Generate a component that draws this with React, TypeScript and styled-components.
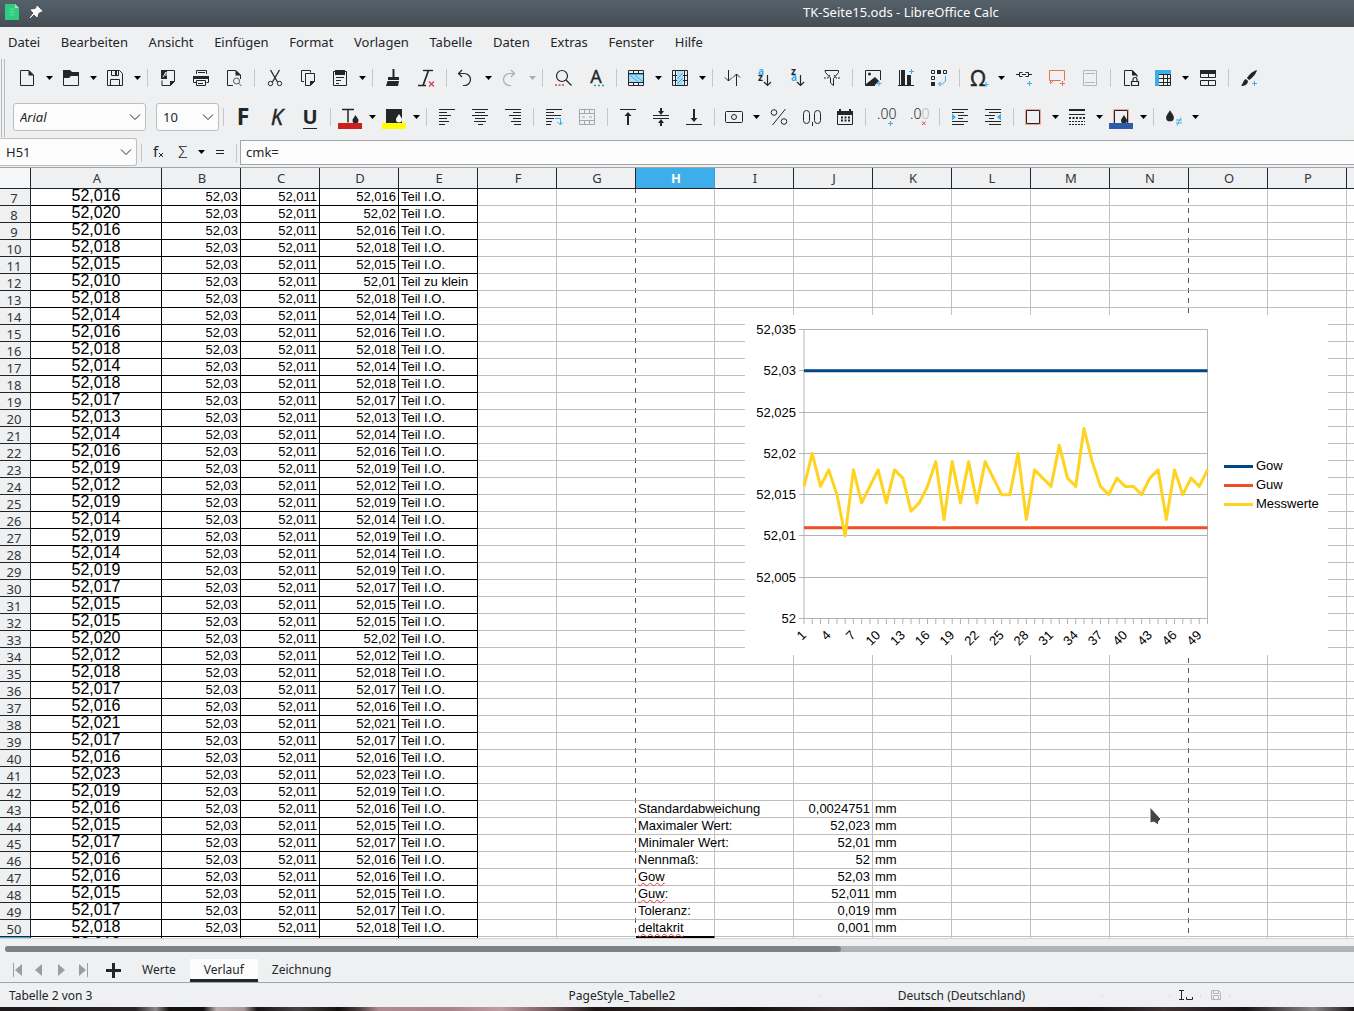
import React from "react";
import styled, { createGlobalStyle } from "styled-components";

const ui = `"Noto Sans", "Open Sans", sans-serif`;
const sheetFont = `"Liberation Sans", Arial, sans-serif`;
const ink = "#232629";
const blue = "#3daee9";
const red = "#da4453";
const orange = "#e8714f";
const face = "#eff0f1";

const Global = createGlobalStyle`
  *, *::before, *::after { box-sizing: border-box; }
  body { margin: 0; background: ${face}; font-family: ${ui}; font-size: 13px; color: ${ink}; overflow: hidden; }
  button, input, select { font: inherit; color: inherit; margin: 0; }
`;

/* ---------- window frame ---------- */

const Window = styled.div`
  display: flex;
  flex-direction: column;
  height: 100vh;
  background: ${face};
`;

const TitleBar = styled.header`
  display: flex;
  align-items: center;
  height: 27px;
  flex: none;
  padding: 0 15px 3px 4px;
  gap: 9px;
  color: #fcfcfc;
  background: linear-gradient(#566069, #454e55);
`;

const TitleSpace = styled.span<{ $grow: number }>`
  flex: ${(p) => p.$grow} 1 0;
`;

const Title = styled.h1`
  margin: 0;
  font-size: 13px;
  line-height: 18px;
  font-weight: 400;
  white-space: nowrap;
`;

const MenuBar = styled.nav`
  display: flex;
  align-items: center;
  justify-content: space-between;
  height: 32px;
  max-width: 711px;
  flex: none;
  padding: 0 8px 2px;
`;

const MenuItem = styled.button`
  border: 0;
  background: none;
  padding: 0;
  line-height: 20px;
`;

/* ---------- toolbars ---------- */

const ToolBar = styled.div`
  display: flex;
  align-items: flex-start;
  height: 39px;
  flex: none;
`;

const Grip = styled.span<{ $space: number }>`
  width: 4px;
  height: 39px;
  margin: 0 ${(p) => p.$space}px 0 1px;
  border: solid #b9bbbd;
  border-width: 0 1px;
`;

const ToolButton = styled.button<{ $menu?: boolean }>`
  display: flex;
  align-items: flex-start;
  width: 33px;
  height: 39px;
  flex: none;
  border: 0;
  background: none;
  padding: 7px 0 0 ${(p) => (p.$menu ? 4 : 5)}px;
  svg { overflow: visible; }
`;

const DropButton = styled.button`
  display: flex;
  align-items: flex-start;
  width: 11px;
  height: 39px;
  flex: none;
  border: 0;
  background: none;
  padding: 16px 0 0 2px;
`;

const Separator = styled.span<{ $top?: number }>`
  width: 1px;
  height: 18px;
  flex: none;
  margin: ${(p) => p.$top ?? 10}px 3px 0 4px;
  background: #c4c6c8;
`;

const ComboBox = styled.label<{ $w: number; $top: number; $right: number; $flush?: boolean }>`
  display: grid;
  align-items: center;
  width: ${(p) => p.$w}px;
  height: 28px;
  flex: none;
  margin: ${(p) => p.$top}px ${(p) => p.$right}px 0 0;
  background: #fcfcfc;
  border: 1px solid #bcbec0;
  border-left-width: ${(p) => (p.$flush ? 0 : 1)}px;
  border-radius: ${(p) => (p.$flush ? "0 3px 3px 0" : "3px")};
  > * { grid-area: 1 / 1; }
  svg { justify-self: end; margin-right: 4px; pointer-events: none; }
`;

const Combo = styled.select<{ $italic?: boolean }>`
  appearance: none;
  border: 0;
  background: none;
  width: 100%;
  height: 26px;
  padding: 0 18px 0 6px;
  font-style: ${(p) => (p.$italic ? "italic" : "normal")};
`;

const FormulaBar = styled.div`
  display: flex;
  align-items: flex-start;
  height: 31px;
  flex: none;
  border-bottom: 1px solid #a2a4a6;
`;

const FormulaButton = styled.button<{ $w: number }>`
  width: ${(p) => p.$w}px;
  height: 28px;
  flex: none;
  border: 0;
  background: none;
  padding: 2px 0 0;
  display: flex;
  justify-content: center;
  align-items: center;
  svg { overflow: visible; }
`;

const FormulaInput = styled.input`
  flex: 1;
  min-width: 0;
  height: 25px;
  margin-top: 3px;
  padding: 0 5px 2px;
  border: 1px solid #a2a4a6;
  border-right: 0;
  background: #fcfcfc;
`;

/* ---------- sheet ---------- */

const Viewport = styled.main`
  position: relative;
  flex: 1;
  min-height: 0;
  overflow: hidden;
  background: #fff;
  border-bottom: 1px solid #d3d5d7;
`;

const Sheet = styled.table`
  table-layout: fixed;
  width: 1426px;
  border-collapse: separate;
  border-spacing: 0;
  font-family: ${sheetFont};
  font-size: 13px;
  color: #000;
`;

const Col = styled.col<{ $w: number; $break?: boolean }>`
  width: ${(p) => p.$w}px;
  ${(p) =>
    p.$break &&
    `background: repeating-linear-gradient(#555 0 5px, transparent 5px 10px) right top / 1px 100% no-repeat;`}
`;

const ColHead = styled.th<{ $on?: boolean }>`
  height: 21px;
  padding: 0 0 0 2px;
  font: ${(p) => (p.$on ? 700 : 400)} 13px/20px ${ui};
  color: ${(p) => (p.$on ? "#fcfcfc" : "#31363b")};
  background: ${(p) => (p.$on ? blue : face)};
  border-right: 1px solid ${(p) => (p.$on ? "#3a9fd4" : ink)};
  border-bottom: 1px solid ${ink};
`;

const Corner = styled.td`
  padding: 0;
  background: #f5f7f9;
  border-right: 1px solid ${ink};
  border-bottom: 1px solid ${ink};
`;

const RowHead = styled.th<{ $on?: boolean }>`
  height: 17px;
  padding: 2px 2px 0 0;
  vertical-align: top;
  font: 400 13px/14px ${ui};
  color: #31363b;
  background: ${(p) => (p.$on ? blue : face)};
  border-right: 1px solid ${ink};
  border-bottom: 1px solid ${ink};
`;

type CellProps = { $boxed?: boolean; $align?: string; $big?: boolean; $break?: boolean; $cursor?: "above" | "on" };

const Cell = styled.td<CellProps>`
  height: 17px;
  padding: 0 2px;
  vertical-align: top;
  white-space: nowrap;
  text-align: ${(p) => p.$align ?? "left"};
  font-size: ${(p) => (p.$big ? 16 : 13)}px;
  line-height: ${(p) => (p.$big ? 14 : 16)}px;
  border-right: 1px solid ${(p) => (p.$break ? "transparent" : p.$boxed ? "#000" : "#c0c0c0")};
  border-bottom: 1px solid ${(p) => (p.$boxed || p.$cursor ? "#000" : "#c0c0c0")};
  ${(p) => p.$cursor === "on" && "border-top: 1px solid #000;"}
`;

const Misspelt = styled.span`
  text-decoration: underline wavy #e03c3c 1px;
  text-underline-offset: 1px;
  text-decoration-skip-ink: none;
`;

const ChartFrame = styled.figure`
  position: absolute;
  left: 745px;
  top: 147px;
  width: 583px;
  height: 340px;
  margin: 0;
  background: #fff;
  svg { display: block; }
`;

const Pointer = styled.svg`
  position: absolute;
  left: 1146px;
  top: 636px;
`;

/* ---------- lower bars ---------- */

const ScrollRow = styled.div`
  height: 20px;
  flex: none;
  padding: 7px 0 0 5px;
`;

const ScrollTrack = styled.div`
  height: 6px;
  border-radius: 3px 0 0 3px;
  background: #b1b3b4;
`;

const ScrollThumb = styled.div`
  width: 62%;
  height: 6px;
  border-radius: 3px;
  background: #7f8183;
`;

const TabRow = styled.div`
  display: flex;
  height: 23px;
  flex: none;
  padding-left: 5px;
`;

const NavButton = styled.button<{ $add?: boolean }>`
  width: ${(p) => (p.$add ? 35 : 22)}px;
  height: 23px;
  border: 0;
  background: none;
  padding: 0 0 ${(p) => (p.$add ? "2px 5px" : "1px 1px")};
  display: grid;
  place-items: center;
`;

const Tab = styled.button<{ $on?: boolean }>`
  height: 23px;
  border: 0;
  padding: 0 14px 2px;
  font-size: 12px;
  background: ${(p) => (p.$on ? "#fcfcfc" : "none")};
  box-shadow: ${(p) => (p.$on ? `inset 0 -3px ${ink}` : "none")};
`;

const StatusBar = styled.footer`
  display: grid;
  grid-template-columns: 424fr 396fr 283fr 67fr 31fr 29fr 30fr 94fr;
  align-items: center;
  height: 25px;
  flex: none;
  border-top: 1px solid #a2a4a6;
  font-size: 12px;
`;

const StatusField = styled.div<{ $start?: boolean }>`
  display: flex;
  align-items: center;
  justify-content: ${(p) => (p.$start ? "flex-start" : "center")};
  padding-left: ${(p) => (p.$start ? 9 : 0)}px;
  white-space: nowrap;
  height: 24px;
  background: ${(p) => (p.$start ? "none" : "linear-gradient(#c0c2c4, #c0c2c4) right center / 1px 1px no-repeat")};
`;

const Wallpaper = styled.div`
  height: 4px;
  flex: none;
  background: linear-gradient(90deg, #1d1719 0, #2a2224 10%, #8d878b 11.5%, #15110f 12.5%, #120e0f 15%, #bfaeb0 16%, #a8989b 18%, #181314 19%, #4a4244 22%, #15100f 25%, #4d3d3f 26.5%, #b08c90 28%, #a88388 33%, #c09da2 37%, #6d5457 41%, #1d1416 44%, #2b2022 50%, #120c0d 55%, #35282a 62%, #130d0f 67%, #2c201e 74%, #120c0d 80%, #3d3033 86%, #1a1214 92%, #8b8688 97%, #1a1315 100%);
`;

/* ---------- icons ---------- */

const P = (props: React.SVGProps<SVGPathElement>) => <path fill="none" stroke={ink} {...props} />;
const F = (props: React.SVGProps<SVGPathElement>) => <path fill={ink} {...props} />;
const T = (props: React.SVGProps<SVGTextElement>) => <text fill={ink} fontFamily={ui} {...props} />;

const plus = (x: number, y: number, c = blue) => <P d={`M${x - 2.5} ${y}h5M${x} ${y - 2.5}v5`} stroke={c} />;
const drop = (x: number, y: number, c = ink, s = 1) => (
  <path fill={c} transform={`translate(${x} ${y}) scale(${s})`} d="M0-4C1.500-1.500 3 0 3 1.500A3 3 0 0 1-3 1.500C-3 0-1.500-1.500 0-4z" />
);

const icons: Record<string, React.ReactNode> = {
  new: <><P d="M5.500 4.500h8.500l4.500 4.500v10.500h-13z" /><F d="M13.500 4v5.500H19z" /></>,
  open: <><F d="M4 4h7l2 2h7v4h-8l-2 2H4z" /><P d="M4.500 5v14.500h15V8" /></>,
  save: <><P d="M4.500 4.500h12l3 3v12h-15z" /><P d="M8.500 4.500v5h7v-5M7.500 19.500v-6h9v6" /><F d="M12 5h2v4h-2z" /></>,
  pdf: <><F d="M5 4h6v9H5z" /><P d="M7 11l3-5v4" stroke={face} /><P d="M11 4.500h7.500v11l-4 4h-8.500v-5" /><F d="M14 20v-5h5z" /></>,
  print: <><P d="M7.500 8V4.500h10V8M7.500 16.500h-3v-6h15v6h-2" /><F d="M4 10h16v3H4z" /><P d="M7.500 14.500h9v5h-9zM9 6.500h7M9 17.500h5" /></>,
  preview: <><P d="M11 19.500H5.500v-15H14l4.500 4.500v4" /><F d="M13.500 4v5.500H19z" /><circle cx="14.500" cy="15" r="3" fill="none" stroke="#555" /><P d="M16.500 17l3 3" stroke="#555" /></>,
  cut: <><P d="M7.500 4l7 12M16.500 4l-7 12" strokeWidth="1.300" /><circle cx="7.500" cy="17.500" r="2.200" fill="none" stroke={ink} /><circle cx="16.500" cy="17.500" r="2.200" fill="none" stroke={ink} /></>,
  copy: <><P d="M8 15.500H5.500v-11h9v2" /><P d="M9.500 7.500h9v8l-4 4h-5z" /><F d="M14 20v-5h5z" /></>,
  paste: <><P d="M5.500 5.500h13v14h-13z" /><F d="M7 4h10v5H7z" /><P d="M8 11.500h8M8 14.500h5M8 17.500h3" /></>,
  clone: <><P d="M12.500 3v9" strokeWidth="2" /><F d="M7 11h11v3H7zM6.500 15h11.500l-1 5H5z" /></>,
  clear: <><P d="M9 4.500h10" strokeWidth="1.400" /><P d="M14.500 4.500L9 19.500M4 19.500h8" strokeWidth="1.700" /><P d="M15 15.500l5 5m0-5l-5 5" stroke={red} strokeWidth="1.400" /></>,
  undo: <P d="M8 4L4.500 7.500 8 11M4.500 7.500h6a6 6 0 0 1 0 12H9" strokeWidth="1.200" />,
  redo: <P d="M13 4l3.500 3.500L13 11M16.500 7.500h-5a6 6 0 0 0 0 12H13" stroke="#a9abad" strokeWidth="1.200" />,
  find: <><circle cx="11" cy="10" r="5.500" fill="none" stroke={ink} strokeWidth="1.200" /><P d="M15 14l5.500 5.500" strokeWidth="1.200" /><P d="M4 19h9" stroke={red} strokeDasharray="2 1.500" strokeWidth="1.500" /></>,
  spell: <><T x="12" y="17" fontSize="18" textAnchor="middle" stroke={ink} strokeWidth=".3">A</T><P d="M10 19.500h10" stroke="#27ae60" strokeDasharray="2 2" strokeWidth="1.500" /></>,
  row: <><P d="M4.500 4.500h15v15h-15zM4.500 7.500h15M4.500 16.500h15M9.500 4v16M14.500 4v16" /><path d="M5 9h14v7H5z" fill="#a9dcf6" /><P d="M6 9.500l8 6M11 9.500l8 6M5 8.500h14" stroke={blue} /></>,
  col: <><P d="M4.500 4.500h15v15h-15zM4.500 9.500h15M4.500 14.500h15M7.500 4v16M16.500 4v16" /><path d="M9 5h6v14H9z" fill="#a9dcf6" /><P d="M9 13l6-6M9 18l6-6" stroke={blue} /></>,
  sort: <P d="M7.500 4v11M4 11.500L7.500 15l3.500-3.500M15.500 20V8M12 11.500L15.500 8l3.500 3.500" />,
  asc: <><T fontSize="10" fontWeight="700"><tspan x="4" y="9" fill={blue}>a</tspan><tspan x="4" y="15">z</tspan></T><P d="M13.500 9v10M10 16l3.500 3.500L17 16" strokeWidth="1.200" /></>,
  desc: <><T fontSize="10" fontWeight="700"><tspan x="4" y="9">z</tspan><tspan x="4" y="15" fill={blue}>a</tspan></T><P d="M13.500 9v10M10 16l3.500 3.500L17 16" strokeWidth="1.200" /></>,
  filter: <><P d="M5 4.500h13.500v2l-5 6v7l-3-2.500v-5L5.500 6.500z" /><P d="M4 12h4l2-3M20 12h-4l-2-3" strokeDasharray="2 1" /></>,
  image: <><P d="M19.500 14V4.500h-15v15H14" /><circle cx="8.500" cy="8" r="1.500" fill={ink} /><F d="M5 18l9-7 4 4-5 5H5z" />{plus(18, 17.500)}</>,
  chart: <><P d="M5.500 4v15.500H20M4 19.500h2" /><F d="M7 4h4v15H7zM13 9h4v10h-4z" />{plus(17.500, 5.500)}</>,
  pivot: <><F d="M10 4h4v4h-4zM4 16h4v4H4z" /><P d="M4.500 4.500h3v3h-3zM16.500 4.500h3v3h-3zM4.500 10.500h3v3h-3z" /><P d="M18.500 10v5l-3 3h-4M14 15.500L11.500 18l2.500 2" stroke={blue} /></>,
  omega: <><T x="11" y="20" fontSize="21" textAnchor="middle" stroke={ink} strokeWidth=".4">Ω</T>{plus(19, 18.500)}</>,
  link: <><P d="M4 8.500h4M16 8.500h4M10 8.500h4M10.500 6.500h-3v4h3M13.500 6.500h3v4h-3" />{plus(17.500, 17.500)}</>,
  comment: <><P d="M10 14.500H4.500v-10h15v10" stroke={orange} /><P d="M5.500 14.500v3l3-3h7" stroke={orange} />{plus(17.500, 17.500, orange)}</>,
  header: <P d="M5.500 4.500h13v15h-13zM7 7.500h10M7 16.500h10" stroke="#b4b6b8" />,
  protect: <><P d="M11 19.500H5.500v-15h8l4.500 4.500v2" /><F d="M13 4v5.500h5.500z" /><P d="M12.500 15.500h7v4h-7zM14 15v-1.500a2 2 0 0 1 4 0V15" strokeWidth="1.200" /></>,
  freeze: <><P d="M8 8.500h11.500v11H8M8 12.500h12M8 16.500h12M12.500 8v12M16.500 8v12" /><path d="M4 4h16v4H8v12H4z" fill={blue} /></>,
  split: <><P d="M4.500 8v3.500h15V8M4.500 14.500h15v5h-15zM12.500 8v3M12.500 15v4" /><F d="M4 4h16v4H4z" /></>,
  brush: <><F d="M20 4c-4 1-8 4.500-10 8l2 2c3.500-2 7-6 8-10zM9 13l2 2c0 3-3 5-7 5 2-2 2-6 5-7z" />{plus(17.500, 17.500)}</>,
  bold: <T x="11" y="20" fontSize="23" fontWeight="700" textAnchor="middle">F</T>,
  italic: <T x="12" y="20" fontSize="22" fontStyle="italic" textAnchor="middle" stroke={ink} strokeWidth=".3">K</T>,
  underline: <><text x="12" y="19" fontSize="20" fontWeight="700" textAnchor="middle" fill={ink} fontFamily={`"Liberation Sans Narrow", "Noto Sans", sans-serif`}>U</text><P d="M5 23.500h14" /></>,
  textcolor: <><P d="M4 4.500h12M10 4.500v13" strokeWidth="1.500" />{drop(17.500, 14)}<path d="M0 18h24v6H0z" fill="#c9211e" /></>,
  highlight: <><F d="M4 4h16v14H4z" />{drop(17, 13, "#fcfcfc")}<path d="M0 18h24v6H0z" fill="#ffff00" /></>,
  left: <P d="M4 4.500h16M4 7.500h8M4 10.500h12M4 13.500h8M4 16.500h10M4 19.500h6" />,
  center: <P d="M4 4.500h16M7 7.500h10M4 10.500h16M7 13.500h10M6 16.500h12M10 19.500h5" />,
  right: <P d="M4 4.500h16M12 7.500h8M8 10.500h12M12 13.500h8M10 16.500h10M13 19.500h7" />,
  wrap: <><P d="M4 4.500h16M4 7.500h8M4 10.500h15M4 13.500h8M4 16.500h6M4 19.500h5" /><P d="M13 13.500h5.500v5.500M15.500 17l3 3 2-3" stroke={blue} /></>,
  merge: <P d="M4.500 4.500h15v15h-15zM4.500 8.500h15M4.500 15.500h15M9.500 4v5M14.500 4v5M9.500 15v5M14.500 15v5M7 12h3M14 12h3" stroke="#a4a6a8" />,
  top: <><P d="M4 4.500h16" /><P d="M12 8v12" strokeWidth="2" /><F d="M12 7l-3.500 4h7z" /></>,
  middle: <><P d="M4 10.500h16M4 13.500h16" /><P d="M12 3v4M12 17v4" strokeWidth="2" /><F d="M12 10L9 6h6zM12 14l-3 4h6z" /></>,
  bottom: <><P d="M4 19.500h16" /><P d="M12 4v12" strokeWidth="2" /><F d="M12 17l-3.500-4h7z" /></>,
  currency: <><rect x="3.500" y="6.500" width="17" height="11" rx="1" fill="none" stroke={ink} /><circle cx="12" cy="12" r="2.500" fill="none" stroke={ink} /></>,
  percent: <><circle cx="7" cy="7.500" r="2.800" fill="none" stroke={ink} /><circle cx="17" cy="16.500" r="2.800" fill="none" stroke={ink} /><P d="M18.500 4l-13 16" /></>,
  number: <><rect x="3.500" y="5.500" width="6" height="13" rx="3" fill="none" stroke={ink} /><rect x="14.500" y="5.500" width="6" height="13" rx="3" fill="none" stroke={ink} /><P d="M12.500 17v4" /></>,
  date: <><P d="M4.500 6.500h15v13h-15z" /><F d="M4 6h16v4H4zM6 4h2v3H6zM16 4h2v3h-2z" /><P d="M8 12.500h9M8 15.500h9" strokeWidth="2" strokeDasharray="2 1.500" /></>,
  adddec: <><T x="3" y="14" fontSize="14" fontWeight="300">.00</T>{plus(16.500, 18.500)}</>,
  deldec: <><T x="3" y="14" fontSize="14" fontWeight="300">.0<tspan fill="#b4b6b8">0</tspan></T><P d="M15 16.500l3.500 3.500m0-3.500L15 20" stroke={red} /></>,
  indent: <><P d="M4 4.500h16M4 7.500h12M10 10.500h10M10 13.500h5M4 16.500h16M4 19.500h12" /><path d="M4 8.500v7l4-3.500z" fill={blue} /></>,
  outdent: <><P d="M4 4.500h16M8 7.500h12M4 10.500h10M8 13.500h5M4 16.500h16M8 19.500h12" /><path d="M20 8.500v7l-4-3.500z" fill={blue} /></>,
  border: <><path d="M4.500 4.500h15v15h-15z" fill="none" stroke="#f2a48c" /><P d="M5.500 5.500h13v13h-13z" /></>,
  linestyle: <><F d="M4 4h16v2H4z" /><P d="M4 9.500h16" /><P d="M4 13h16" strokeWidth="2" strokeDasharray="2 1.500" /><P d="M4 16.500h16M4 19.500h16" strokeDasharray="2 1" /></>,
  bordercolor: <><P d="M4.500 18V4.500h15V18" stroke="#f2a48c" /><P d="M5.500 18V5.500h13V18" />{drop(15, 14)}<path d="M0 18h24v6H0z" fill="#2a5caa" /></>,
  cond: <>{drop(9, 10.500, ink, 1.300)}<P d="M15 15h6M15 18h6M20 12.500l-4 8" stroke={blue} /></>,
};

const toolbarOne = "new+ open+ save+ | pdf print preview | cut copy paste+ | clone clear | undo+ redo+ | find spell | row+ col+ | sort asc desc filter | image chart pivot | omega+ link comment header | protect freeze+ split | brush";
const toolbarTwo = "bold italic underline | textcolor+ highlight+ | left center right | wrap merge | top middle bottom | currency+ percent number date | adddec deldec | indent outdent | border+ linestyle+ bordercolor+ | cond+";

function Arrow({ dim }: { dim?: boolean }) {
  return (
    <svg width="7" height="6" viewBox="0 0 7 6"><path d="M0 1h7L3.500 5z" fill={dim ? "#a9abad" : "#000"} /></svg>
  );
}

function Chevron() {
  return (
    <svg width="12" height="8" viewBox="0 0 12 8"><path d="M1 1.500l5 5 5-5" fill="none" stroke={ink} /></svg>
  );
}

function Tools({ spec }: { spec: string }) {
  return (
    <>
      {spec.split(" ").map((token, i) => {
        if (token === "|") return <Separator key={i} />;
        const name = token.replace("+", "");
        const menu = token.endsWith("+");
        return (
          <React.Fragment key={i}>
            <ToolButton aria-label={name} $menu={menu}>
              <svg width="24" height="24" viewBox="0 0 24 24">{icons[name]}</svg>
            </ToolButton>
            {menu && (
              <DropButton aria-label={`${name} menu`}><Arrow dim={name === "redo"} /></DropButton>
            )}
          </React.Fragment>
        );
      })}
    </>
  );
}

/* ---------- data ---------- */

const values = [
  16, 20, 16, 18, 15, 10, 18, 14, 16, 18, 14, 18, 17, 13, 14, 16, 19, 12, 19, 14, 19, 14, 19, 17, 15, 15, 20, 12, 18,
  17, 16, 21, 17, 16, 23, 19, 16, 15, 17, 16, 16, 15, 17, 18, 12, 18, 15, 17, 16, 18,
];
const letters = "ABCDEFGHIJKLMNOPQ".split("");

const stats: Record<number, [string, string, boolean?]> = {
  43: ["Standardabweichung", "0,0024751"],
  44: ["Maximaler Wert:", "52,023"],
  45: ["Minimaler Wert:", "52,01"],
  46: ["Nennmaß:", "52"],
  47: ["Gow", "52,03", true],
  48: ["Guw:", "52,011", true],
  49: ["Toleranz:", "0,019"],
  50: ["deltakrit", "0,001", true],
};

function cellText(letter: string, row: number, v: number): React.ReactNode {
  const long = `52,0${v}`;
  const stat = stats[row];
  switch (letter) {
    case "A": return long;
    case "B": return "52,03";
    case "C": return "52,011";
    case "D": return long.replace(/0$/, "");
    case "E": return v < 11 ? "Teil zu klein" : "Teil I.O.";
    case "H":
      if (!stat) return null;
      if (!stat[2]) return stat[0];
      return <><Misspelt>{stat[0].replace(":", "")}</Misspelt>{stat[0].endsWith(":") && ":"}</>;
    case "J": return stat ? stat[1] : null;
    case "K": return stat ? "mm" : null;
    default: return null;
  }
}

function Grid() {
  return (
    <Sheet>
      <colgroup>
        <Col $w={31} />
        {letters.map((l) => <Col key={l} $w={l === "A" ? 131 : 79} $break={l === "G" || l === "N"} />)}
      </colgroup>
      <thead>
        <tr>
          <Corner />
          {letters.map((l) => <ColHead key={l} scope="col" $on={l === "H"}>{l}</ColHead>)}
        </tr>
      </thead>
      <tbody>
        {values.slice(0, 45).map((v, i) => {
          const row = i + 7;
          return (
            <tr key={row}>
              <RowHead scope="row" $on={row === 51}>{row}</RowHead>
              {letters.map((l) => (
                <Cell
                  key={l}
                  $boxed={l < "F"}
                  $big={l === "A"}
                  $break={l === "G" || l === "N"}
                  $align={l === "A" ? "center" : "BCDJ".includes(l) ? "right" : "left"}
                  $cursor={l !== "H" ? undefined : row === 50 ? "above" : row === 51 ? "on" : undefined}
                >
                  {cellText(l, row, v)}
                </Cell>
              ))}
            </tr>
          );
        })}
      </tbody>
    </Sheet>
  );
}

function Chart() {
  const left = 59;
  const right = 462.5;
  const yOf = (v: number) => 303.5 - v * (289 / 35);
  const step = (right - left) / 49;
  const marks: [number, string][] = [
    [0, "52"], [5, "52,005"], [10, "52,01"], [15, "52,015"], [20, "52,02"], [25, "52,025"], [30, "52,03"], [35, "52,035"],
  ];
  const legend: [string, string][] = [["Gow", "#004586"], ["Guw", "#f04e23"], ["Messwerte", "#ffd320"]];
  return (
    <ChartFrame>
      <svg width="583" height="340" viewBox="0 0 583 340" role="img" aria-label="Verlauf" fontFamily={sheetFont} fontSize="13">
        {marks.map(([v, label]) => (
          <g key={label}>
            <line x1={left - 5} x2={right} y1={Math.floor(yOf(v)) + 0.5} y2={Math.floor(yOf(v)) + 0.5} stroke="#b3b3b3" />
            <text x="51" y={Math.floor(yOf(v)) + 5} textAnchor="end">{label}</text>
          </g>
        ))}
        <path d={`M${left} 14.500V303.500M${right} 14.500V303.500`} stroke="#b3b3b3" />
        {values.map((_, i) => (
          <React.Fragment key={i}>
            <line x1={left + i * step} x2={left + i * step} y1="303.5" y2="309" stroke="#b3b3b3" />
            {i % 3 === 0 && (
              <text textAnchor="end" transform={`translate(${left + i * step + 3} 321) rotate(-45)`}>{i + 1}</text>
            )}
          </React.Fragment>
        ))}
        <line x1={left} x2={right} y1={yOf(30)} y2={yOf(30)} stroke="#004586" strokeWidth="3" />
        <line x1={left} x2={right} y1={yOf(11)} y2={yOf(11)} stroke="#f04e23" strokeWidth="3" />
        <polyline
          fill="none"
          stroke="#ffd320"
          strokeWidth="3"
          strokeLinejoin="round"
          points={values.map((v, i) => `${left + i * step},${yOf(v)}`).join(" ")}
        />
        {legend.map(([name, color], i) => (
          <g key={name}>
            <line x1="479" x2="508" y1={151.5 + i * 19} y2={151.5 + i * 19} stroke={color} strokeWidth="3" />
            <text x="511" y={155 + i * 19}>{name}</text>
          </g>
        ))}
      </svg>
    </ChartFrame>
  );
}

export default function App() {
  return (
    <Window>
      <Global />
      <TitleBar>
        <svg width="16" height="18" viewBox="0 0 16 18">
          <path d="M1 1h10l4 4v12H1z" fill="#2ecc80" />
          <path d="M11 1v4h4z" fill="#9fe8c4" />
          <path d="M5 6h6M5 9h6M5 12h6M8 6v6" stroke="#5fd89e" fill="none" />
        </svg>
        <svg width="14" height="14" viewBox="0 0 14 14">
          <path d="M8 1l5 5-2 .5-2.500 2.500-.5 3-3-3-4 4 4-5-3-3 3.500-.5L8 3z" fill="#fcfcfc" stroke="#fcfcfc" />
        </svg>
        <TitleSpace $grow={56} />
        <Title>TK-Seite15.ods - LibreOffice Calc</Title>
        <TitleSpace $grow={25} />
      </TitleBar>

      <MenuBar>
        {["Datei", "Bearbeiten", "Ansicht", "Einfügen", "Format", "Vorlagen", "Tabelle", "Daten", "Extras", "Fenster", "Hilfe"].map((m) => (
          <MenuItem key={m}>{m}</MenuItem>
        ))}
      </MenuBar>

      <ToolBar>
        <Grip $space={6} />
        <Tools spec={toolbarOne} />
      </ToolBar>

      <ToolBar>
        <Grip $space={8} />
        <ComboBox $w={133} $top={5} $right={10}>
          <Combo aria-label="Schriftart" $italic defaultValue="Arial"><option>Arial</option></Combo>
          <Chevron />
        </ComboBox>
        <ComboBox $w={63} $top={5} $right={0}>
          <Combo aria-label="Schriftgröße" defaultValue="10"><option>10</option></Combo>
          <Chevron />
        </ComboBox>
        <Separator />
        <Tools spec={toolbarTwo} />
      </ToolBar>

      <FormulaBar>
        <ComboBox $w={137} $top={1} $right={0} $flush>
          <Combo aria-label="Namensfeld" defaultValue="H51"><option>H51</option></Combo>
          <Chevron />
        </ComboBox>
        <Separator $top={7} />
        <FormulaButton $w={25} aria-label="Funktionsassistent">
          <svg width="12" height="16" viewBox="0 0 12 16"><T x="1" y="13" fontSize="15">f</T><P d="M7 9l4 4m0-4l-4 4" /></svg>
        </FormulaButton>
        <FormulaButton $w={25} aria-label="Summe">
          <svg width="14" height="16" viewBox="0 0 14 16"><T x="7" y="14" fontSize="17" fontWeight="300" textAnchor="middle">Σ</T></svg>
        </FormulaButton>
        <FormulaButton $w={12} aria-label="Summe Auswahl"><Arrow /></FormulaButton>
        <FormulaButton $w={25} aria-label="Formel">
          <svg width="10" height="8" viewBox="0 0 10 8"><P d="M1 2.500h8M1 5.500h8" /></svg>
        </FormulaButton>
        <Separator $top={7} />
        <FormulaInput aria-label="Eingabezeile" defaultValue="cmk=" />
      </FormulaBar>

      <Viewport>
        <Grid />
        <Chart />
        <Pointer width="20" height="24" viewBox="0 0 20 24">
          <path d="M4 3v16l4-1 4 3 1-4 2-2z" fill="#454545" stroke="#fff" />
        </Pointer>
      </Viewport>

      <ScrollRow><ScrollTrack><ScrollThumb /></ScrollTrack></ScrollRow>

      <TabRow>
        <NavButton aria-label="Erste Tabelle"><svg width="14" height="14" viewBox="0 0 14 14"><path d="M3 0h1v14H3zM12 1v12L5 7z" fill="#9b9d9f" /></svg></NavButton>
        <NavButton aria-label="Vorherige Tabelle"><svg width="14" height="14" viewBox="0 0 14 14"><path d="M10 1v12L3 7z" fill="#9b9d9f" /></svg></NavButton>
        <NavButton aria-label="Nächste Tabelle"><svg width="14" height="14" viewBox="0 0 14 14"><path d="M4 1v12l7-6z" fill="#9b9d9f" /></svg></NavButton>
        <NavButton aria-label="Letzte Tabelle"><svg width="14" height="14" viewBox="0 0 14 14"><path d="M3 1v12l7-6zM11 0h1v14h-1z" fill="#9b9d9f" /></svg></NavButton>
        <NavButton $add aria-label="Tabelle hinzufügen"><svg width="16" height="16" viewBox="0 0 16 16"><F d="M7 1h3v6h6v3h-6v6H7v-6H1V7h6z" /></svg></NavButton>
        <Tab>Werte</Tab>
        <Tab $on>Verlauf</Tab>
        <Tab>Zeichnung</Tab>
      </TabRow>

      <StatusBar>
        <StatusField $start>Tabelle 2 von 3</StatusField>
        <StatusField>PageStyle_Tabelle2</StatusField>
        <StatusField>Deutsch (Deutschland)</StatusField>
        <StatusField />
        <StatusField>
          <svg width="16" height="12" viewBox="0 0 16 12"><P d="M1 1.500h5M3.500 1v10M1 10.500h5M8.500 8v2.500h6V8" /></svg>
        </StatusField>
        <StatusField>
          <svg width="12" height="12" viewBox="0 0 12 12"><P d="M1.500 1.500h7l2 2v7h-9zM3.500 1.500v3h5v-3M3.500 10.500v-4h5v4" stroke="#b4b6b8" /></svg>
        </StatusField>
      </StatusBar>
      <Wallpaper />
    </Window>
  );
}
